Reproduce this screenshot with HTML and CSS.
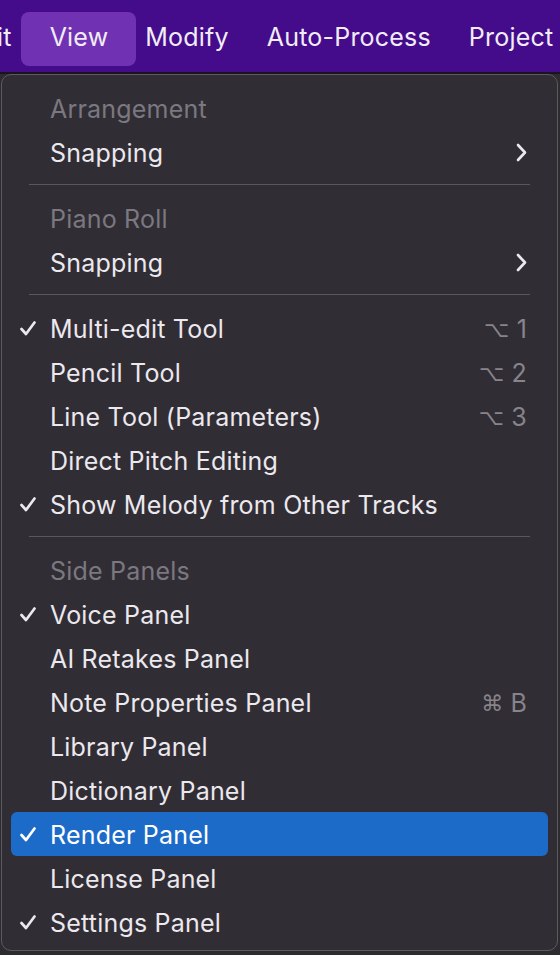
FILE: index.html
```html
<!DOCTYPE html>
<html>
<head>
<meta charset="utf-8">
<link rel="stylesheet" href="styles.css">
</head>
<body>
<div class="menubar">
  <span class="mb-item">it</span>
  <span class="mb-item active">View</span>
  <span class="mb-item">Modify</span>
  <span class="mb-item">Auto-Process</span>
  <span class="mb-item">Project</span>
</div>
<div class="menu">
  <div class="row header"><span class="check"></span><span class="label">Arrangement</span></div>
  <div class="row"><span class="check"></span><span class="label">Snapping</span><svg class="chev" width="11" height="19" viewBox="0 0 11 19"><path d="M2 2 L9 9.5 L2 17" fill="none" stroke="#ebe8ee" stroke-width="2.6" stroke-linecap="round" stroke-linejoin="round"/></svg></div>
  <div class="sep"></div>
  <div class="row header"><span class="check"></span><span class="label">Piano Roll</span></div>
  <div class="row"><span class="check"></span><span class="label">Snapping</span><svg class="chev" width="11" height="19" viewBox="0 0 11 19"><path d="M2 2 L9 9.5 L2 17" fill="none" stroke="#ebe8ee" stroke-width="2.6" stroke-linecap="round" stroke-linejoin="round"/></svg></div>
  <div class="sep"></div>
  <div class="row"><svg class="check" width="16" height="15" viewBox="0 0 16 15"><path d="M1.5 8 L6 13 L14.5 1.5" fill="none" stroke="#ebe8ee" stroke-width="2.7" stroke-linecap="round" stroke-linejoin="round"/></svg><span class="label">Multi-edit Tool</span><span class="key"><span class="sym">⌥</span>1</span></div>
  <div class="row"><span class="check"></span><span class="label">Pencil Tool</span><span class="key"><span class="sym">⌥</span>2</span></div>
  <div class="row"><span class="check"></span><span class="label">Line Tool (Parameters)</span><span class="key"><span class="sym">⌥</span>3</span></div>
  <div class="row"><span class="check"></span><span class="label">Direct Pitch Editing</span></div>
  <div class="row"><svg class="check" width="16" height="15" viewBox="0 0 16 15"><path d="M1.5 8 L6 13 L14.5 1.5" fill="none" stroke="#ebe8ee" stroke-width="2.7" stroke-linecap="round" stroke-linejoin="round"/></svg><span class="label">Show Melody from Other Tracks</span></div>
  <div class="sep"></div>
  <div class="row header"><span class="check"></span><span class="label">Side Panels</span></div>
  <div class="row"><svg class="check" width="16" height="15" viewBox="0 0 16 15"><path d="M1.5 8 L6 13 L14.5 1.5" fill="none" stroke="#ebe8ee" stroke-width="2.7" stroke-linecap="round" stroke-linejoin="round"/></svg><span class="label">Voice Panel</span></div>
  <div class="row"><span class="check"></span><span class="label">AI Retakes Panel</span></div>
  <div class="row"><span class="check"></span><span class="label">Note Properties Panel</span><span class="key"><span class="sym">⌘</span>B</span></div>
  <div class="row"><span class="check"></span><span class="label">Library Panel</span></div>
  <div class="row"><span class="check"></span><span class="label">Dictionary Panel</span></div>
  <div class="row selected"><svg class="check" width="16" height="15" viewBox="0 0 16 15"><path d="M1.5 8 L6 13 L14.5 1.5" fill="none" stroke="#ffffff" stroke-width="2.7" stroke-linecap="round" stroke-linejoin="round"/></svg><span class="label">Render Panel</span></div>
  <div class="row"><span class="check"></span><span class="label">License Panel</span></div>
  <div class="row"><svg class="check" width="16" height="15" viewBox="0 0 16 15"><path d="M1.5 8 L6 13 L14.5 1.5" fill="none" stroke="#ebe8ee" stroke-width="2.7" stroke-linecap="round" stroke-linejoin="round"/></svg><span class="label">Settings Panel</span></div>
</div>
</body>
</html>
```

FILE: styles.css
```css
html, body {
  margin: 0;
  padding: 0;
}
body {
  width: 560px;
  height: 955px;
  overflow: hidden;
  background: #2c2b2e;
  font-family: "Inter", "Noto Sans", sans-serif;
  -webkit-font-smoothing: antialiased;
}
.menubar {
  height: 74px;
  background: #440c8b;
  border-bottom: 2px solid #1b1320;
  box-sizing: border-box;
  display: flex;
  align-items: flex-start;
  padding-top: 12px;
  white-space: nowrap;
  overflow: hidden;
  color: #f1ecf6;
  font-size: 25px;
  letter-spacing: 0.2px;
}
.mb-item {
  padding: 0 19px;
  height: 54px;
  box-sizing: border-box;
  line-height: 50px;
}
.mb-item:first-child {
  padding-left: 0;
  margin-left: -3px;
}
.mb-item.active {
  background: #7032b3;
  border-radius: 8px;
  padding: 0 28px 0 29px;
  margin: 0 -10px;
}
.menu {
  margin-left: 1px;
  width: 557px;
  height: 877px;
  box-sizing: border-box;
  border: 1px solid #5c5a60;
  border-radius: 10px;
  background: #312d34;
  padding: 11px 0 5px;
  color: #ebe8ee;
  font-size: 25px;
  letter-spacing: 0.2px;
}
.row {
  height: 44px;
  margin: 0 9px;
  padding: 0 21px 0 9px;
  display: flex;
  align-items: center;
  border-radius: 6px;
}
.row.header {
  color: #7b7880;
}
.row.selected {
  background: #1d6bc9;
  color: #ffffff;
}
.check {
  width: 16px;
  flex: none;
  margin-right: 14px;
}
.label {
  flex: 1;
  white-space: nowrap;
  padding-top: 2px;
}
.chev {
  flex: none;
}
.key {
  flex: none;
  color: #87848b;
  display: flex;
  align-items: center;
  padding-top: 2px;
}
.sym {
  font-family: "DejaVu Sans", sans-serif;
  font-size: 22px;
  margin-right: 7px;
}
.sep {
  height: 1px;
  background: #5a575d;
  margin: 10px 27px 11px;
}
```
